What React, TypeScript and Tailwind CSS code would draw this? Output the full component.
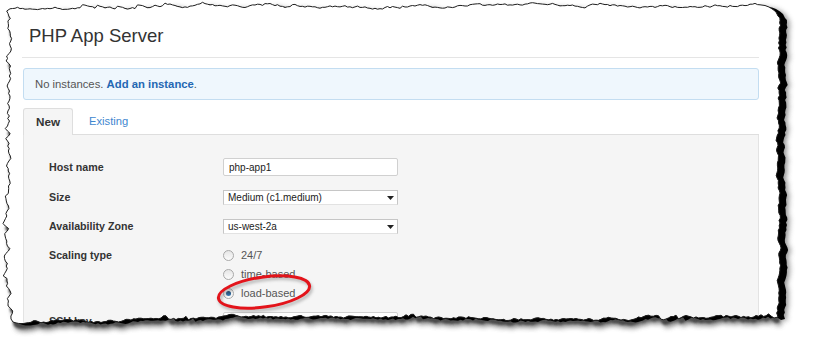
import React from "react";

function mulberry32(a: number) {
  return function () {
    a |= 0;
    a = (a + 0x6d2b79f5) | 0;
    let t = Math.imul(a ^ (a >>> 15), 1 | a);
    t = (t + Math.imul(t ^ (t >>> 7), 61 | t)) ^ t;
    return ((t ^ (t >>> 14)) >>> 0) / 4294967296;
  };
}

function buildTear(): string {
  const r = mulberry32(12345);
  const pts: [number, number][] = [];
  let o = 0;
  // top edge
  for (let x = 10; x <= 760; x += 2.5) {
    o = o * 0.7 + (r() - 0.5) * 2.2;
    if (r() < 0.03) o -= 2.5;
    pts.push([x, 7.5 - (x / 760) * 2.5 + Math.sin(x / 47) * 1.2 + o]);
  }
  pts.push([765, 5.5], [769, 7], [773, 9.5], [776, 12], [778, 16]);
  o = 0;
  // right edge
  for (let y = 18; y <= 314; y += 2.5) {
    o = o * 0.65 + (r() - 0.5) * 2.4;
    pts.push([778.5 + Math.sin(y / 31) * 0.8 + o, y]);
  }
  pts.push([778, 317], [774, 318]);
  o = 0;
  // bottom edge
  for (let x = 771; x >= 16; x -= 2.5) {
    o = o * 0.7 + (r() - 0.5) * 2.4;
    if (r() < 0.04) o -= 2.2;
    const base =
      318 + Math.sin(x / 70) * 1.8 + (x < 140 ? (140 - x) / 30 : 0);
    pts.push([x, base + o]);
  }
  pts.push([13, 322], [11, 319]);
  o = 0;
  // left edge
  for (let y = 316; y >= 11; y -= 2.5) {
    o = o * 0.6 + (r() - 0.5) * 4.2;
    if (r() < 0.05) o -= 3;
    pts.push([8.5 + Math.sin(y / 23) * 1.3 + o, y]);
  }
  return (
    "M" +
    pts.map((p) => p[0].toFixed(1) + " " + p[1].toFixed(1)).join("L") +
    "Z"
  );
}

function TornOverlay() {
  const poly = buildTear();
  const outer = "M0 0H815V339H0Z ";
  return (
    <svg
      className="pointer-events-none absolute left-0 top-0"
      width={815}
      height={339}
      viewBox="0 0 815 339"
    >
      <defs>
        <clipPath id="outsideClip">
          <path d={outer + poly} clipRule="evenodd" />
        </clipPath>
        <filter id="shBlurA" x="-5%" y="-5%" width="110%" height="115%">
          <feGaussianBlur stdDeviation="2.6" />
        </filter>
        <filter id="shBlurB" x="-5%" y="-5%" width="110%" height="115%">
          <feGaussianBlur stdDeviation="1.3" />
        </filter>
        <filter id="shBlurC" x="-5%" y="-5%" width="110%" height="115%">
          <feGaussianBlur stdDeviation="0.6" />
        </filter>
      </defs>
      <path d={outer + poly} fill="#ffffff" fillRule="evenodd" />
      <g clipPath="url(#outsideClip)">
        <path
          d={poly}
          transform="translate(4,8)"
          fill="#555"
          opacity="0.7"
          filter="url(#shBlurA)"
        />
        <path
          d={poly}
          transform="translate(2,5)"
          fill="#3c3c3c"
          opacity="0.9"
          filter="url(#shBlurB)"
        />
        <path
          d={poly}
          transform="translate(10,3)"
          fill="#666"
          opacity="0.6"
          filter="url(#shBlurA)"
        />
        <path
          d={poly}
          transform="translate(7,2)"
          fill="#000"
          opacity="1"
          filter="url(#shBlurC)"
        />
      </g>
      <path d={poly} fill="none" stroke="#1e1e1e" strokeWidth="1" />
    </svg>
  );
}

function Caret() {
  return (
    <svg width="7" height="4" viewBox="0 0 7 4" className="mr-[3px]">
      <path d="M0 0H7L3.5 4Z" fill="#222" />
    </svg>
  );
}

function Radio({ checked }: { checked?: boolean }) {
  return (
    <span className="relative flex h-[11px] w-[11px] items-center justify-center rounded-full border border-[#a9a9a9] bg-gradient-to-b from-[#e6e6e6] to-[#fbfbfb]">
      {checked && (
        <span className="h-[5px] w-[5px] rounded-full bg-gradient-to-b from-[#0e3b66] to-[#3a7fb8]" />
      )}
    </span>
  );
}

function Label({ children }: { children: React.ReactNode }) {
  return (
    <div className="w-[174px] shrink-0 text-[10.7px] font-bold text-[#333]">
      {children}
    </div>
  );
}

export default function App() {
  return (
    <div
      className="relative h-[339px] w-[815px] overflow-hidden bg-white"
      style={{ fontFamily: '"Liberation Sans", Arial, sans-serif' }}
    >
      <div className="flex h-full flex-col pl-[22px] pr-[56px]">
        <div className="ml-[7px] mt-[25px] h-[21px] text-[18.5px] leading-[21px] text-[#333]">
          PHP App Server
        </div>
        <div className="mt-[11px] border-t border-[#e5e5e5]" />
        <div className="ml-px mt-[10px] flex h-[32px] items-center rounded-[3px] border border-[#c3ddf1] bg-[#eff7fd] pl-[11px] text-[11.3px] text-[#555]">
          No instances.&nbsp;
          <span className="font-bold text-[#2467b3]">Add an instance</span>.
        </div>
        <div className="ml-px mt-[8px] flex h-[27px] items-stretch border-b border-[#dedede]">
          <div className="-mb-px flex w-[50px] items-center rounded-t-[3px] border border-b-0 border-[#dedede] bg-[#f5f5f5] pl-[12px] text-[11.7px] font-bold text-[#333]">
            New
          </div>
          <div className="ml-[16px] flex items-center text-[11.2px] text-[#3f87cf]">
            Existing
          </div>
        </div>
        <div className="ml-px flex flex-1 flex-col border-x border-[#e3e3e3] bg-[#f5f5f5] pl-[25px]">
          <div className="mt-[23px] flex h-[18px] items-center">
            <Label>Host name</Label>
            <div className="flex h-[18px] w-[175px] items-center rounded-[2px] border border-[#d0d0d0] bg-white pl-[5px] text-[10px] text-[#222]">
              php-app1
            </div>
          </div>
          <div className="mt-[14px] flex h-[15px] items-center">
            <Label>Size</Label>
            <div className="flex h-[15px] w-[175px] items-center justify-between border border-[#c6c6c6] border-b-[#e2e2e2] bg-white pl-[4px] text-[10px] text-[#222]">
              <span>Medium (c1.medium)</span>
              <Caret />
            </div>
          </div>
          <div className="mt-[14px] flex h-[15px] items-center">
            <Label>Availability Zone</Label>
            <div className="flex h-[15px] w-[175px] items-center justify-between border border-[#c6c6c6] border-b-[#e2e2e2] bg-white pl-[4px] text-[10px] text-[#222]">
              <span>us-west-2a</span>
              <Caret />
            </div>
          </div>
          <div className="mt-[12px] flex items-start">
            <div className="flex h-[19px] items-center">
              <Label>Scaling type</Label>
            </div>
            <div className="flex flex-col">
              <div className="flex h-[19px] items-center gap-[7px] text-[11px] text-[#555]">
                <Radio />
                <span>24/7</span>
              </div>
              <div className="flex h-[19px] items-center gap-[7px] text-[11px] text-[#555]">
                <Radio />
                <span>time-based</span>
              </div>
              <div className="flex h-[19px] items-center gap-[7px] text-[11px] text-[#555]">
                <Radio checked />
                <span>load-based</span>
              </div>
            </div>
          </div>
          <div className="mt-[9px] flex h-[18px] items-center">
            <Label>SSH key</Label>
            <div className="h-[18px] w-[175px] rounded-[2px] border border-[#d0d0d0] bg-white" />
          </div>
        </div>
      </div>

      <svg
        className="pointer-events-none absolute left-[212px] top-[268px]"
        width={106}
        height={50}
        viewBox="0 0 106 50"
      >
        <defs>
          <filter id="ellSh" x="-20%" y="-30%" width="140%" height="160%">
            <feGaussianBlur stdDeviation="1.5" />
          </filter>
        </defs>
        <g transform="translate(1.5 2.5)">
          <ellipse
            cx="52"
            cy="24"
            rx="46"
            ry="15"
            transform="rotate(-8 52 24)"
            fill="none"
            stroke="#666"
            strokeWidth="3"
            opacity="0.45"
            filter="url(#ellSh)"
          />
        </g>
        <ellipse
          cx="52"
          cy="24"
          rx="46"
          ry="15"
          transform="rotate(-8 52 24)"
          fill="none"
          stroke="#e3141b"
          strokeWidth="3"
        />
      </svg>

      <TornOverlay />
    </div>
  );
}
